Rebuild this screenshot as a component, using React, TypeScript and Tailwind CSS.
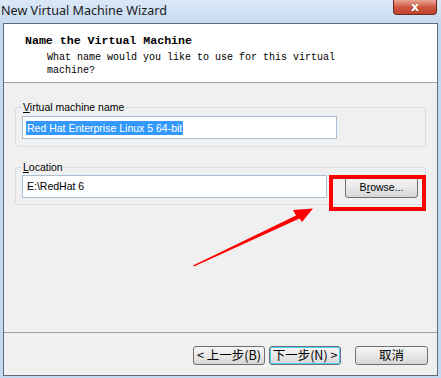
export default function App() {
  const ui = { fontFamily: '"Liberation Sans", Arial, sans-serif' };
  const mono = { fontFamily: '"Liberation Mono", "Courier New", monospace' };
  const cjk = { fontFamily: '"Noto Sans CJK SC", "Liberation Sans", sans-serif' };

  const btn =
    "h-[19px] w-[72px] rounded-[3px] border border-[#707070] bg-gradient-to-b from-[#f4f4f4] via-[#e9e9e9] to-[#d6d6d6] leading-none text-black flex items-center justify-center";

  return (
    <div className="relative w-[441px] h-[378px] overflow-hidden bg-[#c4d9ef]" style={ui}>
      {/* title bar */}
      <div className="relative h-[23px] flex items-center pl-[1px] bg-gradient-to-b from-[#dbe8f6] to-[#c6dbf0]">
        <span className="text-[12.6px] text-[#1b1b1b]" style={{ fontFamily: '"Noto Sans", sans-serif' }}>
          New Virtual Machine Wizard
        </span>
        <div className="absolute right-[4px] top-0 h-[15px] w-[44px] rounded-b-[4px] border border-t-0 border-[#6b2a22] bg-gradient-to-b from-[#e8a597] via-[#d0563f] to-[#c1412c] flex items-center justify-center">
          <span
            className="text-white text-[13px] font-bold leading-none -mt-[2px] [text-shadow:0_0_1px_#5a1a10]"
            style={{ fontFamily: '"DejaVu Sans", sans-serif' }}
          >
            x
          </span>
        </div>
      </div>

      {/* client */}
      <div className="mx-[3px] h-[353px] border border-[#5e6c7c] bg-[#f0f0f0] flex flex-col">
        <div className="h-[59px] bg-white border-b border-[#a0a0a0] pl-[21px] pt-[10px]" style={mono}>
          <div className="text-[11.6px] font-bold leading-[14px] text-black">Name the Virtual Machine</div>
          <div className="pl-[22px] pt-[3px] text-[10px] leading-[13px] text-black">
            What name would you like to use for this virtual
            <br />
            machine?
          </div>
        </div>

        <div className="px-[11px] text-[10.5px]">
          <fieldset className="mt-[18px] rounded-[3px] border border-[#d5dfe5] pl-[6px] pr-[10px] pt-[2px] pb-[7px]">
            <legend className="px-[1px] leading-[13px] text-black">
              <span className="underline">V</span>irtual machine name
            </legend>
            <div className="h-[23px] w-[315px] border border-[#abbdd0] bg-white flex items-center px-[3px]">
              <span className="bg-[#3399ff] text-white leading-[14px] px-[1px]">Red Hat Enterprise Linux 5 64-bit</span>
            </div>
          </fieldset>

          <fieldset className="mt-[14px] rounded-[3px] border border-[#d5dfe5] pl-[6px] pr-[7px] pt-[1px] pb-[6px]">
            <legend className="px-[1px] leading-[13px] text-black">
              <span className="underline">L</span>ocation
            </legend>
            <div className="flex items-center">
              <div className="h-[23px] w-[305px] border border-[#abbdd0] bg-white flex items-center px-[4px] text-black">
                E:\RedHat 6
              </div>
              <button className={btn + " ml-[18px] w-[73px] h-[21px] mt-[2px] text-[10.5px]"} style={ui}>
                B<span className="underline">r</span>owse...
              </button>
            </div>
          </fieldset>
        </div>

        <div className="flex-1" />

        <div className="h-[43px] border-t border-[#a0a0a0] flex items-start justify-end pt-[13px] pr-[9px]">
          <button className={btn + " text-[12.5px]"} style={cjk}>
            &lt; 上一步(B)
          </button>
          <button
            className={btn + " ml-[4px] text-[12.5px] border-[#3c7fb1] shadow-[inset_0_0_0_1px_#48d3fd]"}
            style={cjk}
          >
            下一步(N) &gt;
          </button>
          <button className={btn + " ml-[14px] w-[73px] text-[12.5px]"} style={cjk}>
            取消
          </button>
        </div>
      </div>

      {/* annotation: red box + arrow */}
      <div className="absolute left-[329px] top-[175px] w-[97px] h-[36px] border-[4px] border-[#ff0000]" />
      <svg className="absolute left-0 top-0" width="441" height="378" viewBox="0 0 441 378">
        <polygon points="193,265.5 296,215.5 293,210 313,208.5 302,222 299.5,218.5 194,266.5" fill="#ff0000" />
      </svg>
    </div>
  );
}
